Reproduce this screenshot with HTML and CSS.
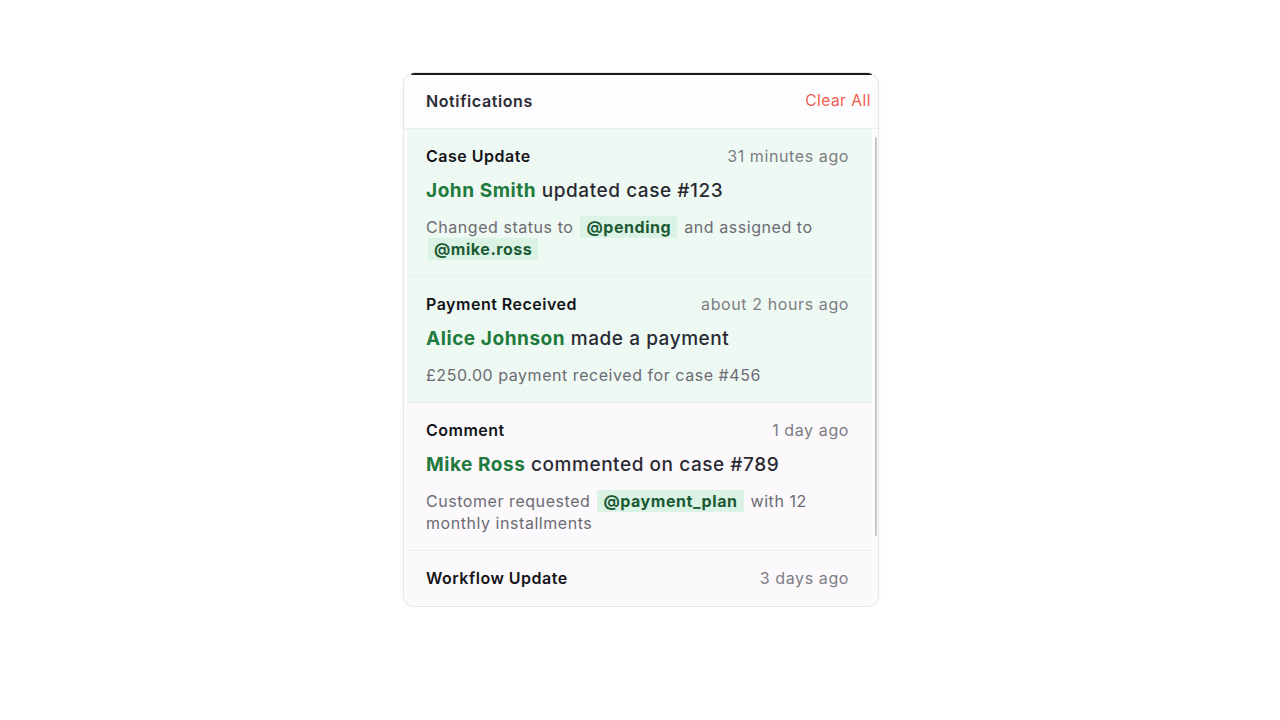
FILE: index.html
```html
<!DOCTYPE html>
<html lang="en">
<head>
<meta charset="utf-8">
<title>Notifications</title>
<link rel="stylesheet" href="styles.css">
</head>
<body>
<div class="panel">
  <div class="panel-header">
    <span class="panel-title">Notifications</span>
    <span class="clear-all">Clear All</span>
  </div>
  <div class="list">
    <div class="item item-green">
      <div class="item-top">
        <span class="item-type">Case Update</span>
        <span class="item-time">31 minutes ago</span>
      </div>
      <div class="item-headline"><span class="name">John Smith</span> updated case #123</div>
      <div class="item-body">Changed status to <span class="mention">@pending</span> and assigned to <span class="mention">@mike.ross</span></div>
    </div>
    <div class="item item-green">
      <div class="item-top">
        <span class="item-type">Payment Received</span>
        <span class="item-time">about 2 hours ago</span>
      </div>
      <div class="item-headline"><span class="name">Alice Johnson</span> made a payment</div>
      <div class="item-body">£250.00 payment received for case #456</div>
    </div>
    <div class="item item-plain item-sep-inset">
      <div class="item-top">
        <span class="item-type">Comment</span>
        <span class="item-time">1 day ago</span>
      </div>
      <div class="item-headline"><span class="name">Mike Ross</span> commented on case #789</div>
      <div class="item-body">Customer requested <span class="mention">@payment_plan</span> with 12 monthly installments</div>
    </div>
    <div class="item item-plain">
      <div class="item-top">
        <span class="item-type">Workflow Update</span>
        <span class="item-time">3 days ago</span>
      </div>
    </div>
  </div>
  <div class="scroll-thumb"></div>
</div>
</body>
</html>
```

FILE: styles.css
```css
html, body {
  margin: 0;
  padding: 0;
  background: #ffffff;
}
body {
  padding: 72px 0 0 403px;
  font-family: Inter, "Noto Sans", sans-serif;
  color: #2a2a33;
}
.panel {
  position: relative;
  width: 476px;
  height: 535px;
  box-sizing: border-box;
  border: 1px solid #e7e5ea;
  border-radius: 12px;
  background: #fdfcfe;
  overflow: hidden;
  box-shadow: 0 2px 4px rgba(0,0,0,0.04);
}
.panel::before {
  content: "";
  position: absolute;
  top: 0;
  left: 7px;
  right: 6px;
  height: 2px;
  border-radius: 1px;
  background: #1a1a1a;
}
.panel-header {
  height: 55px;
  display: flex;
  align-items: center;
  justify-content: space-between;
  padding: 0 7px 0 22px;
  border-bottom: 1px solid #eeeef0;
}
.panel-title {
  font-size: 16px;
  font-weight: 600;
  letter-spacing: 0.6px;
  color: #2b2b33;
}
.clear-all {
  font-size: 15.5px;
  letter-spacing: 0.5px;
  color: #f25c4c;
}
.list {
  margin: 0 6px 0 3px;
  height: 478px;
  overflow: hidden;
}
.item {
  padding: 15px 23px 16px 19px;
  border-bottom: 1px solid #e6eee9;
}
.item-green {
  background: #eff9f3;
}
.item-plain {
  background: #fbf9fc;
  border-bottom: none;
}
.item-sep-inset {
  padding-bottom: 17px;
  box-shadow: inset 0 -1px 0 #ecebef;
}
.item-top {
  display: flex;
  justify-content: space-between;
  align-items: center;
  height: 24px;
}
.item-type {
  font-size: 16px;
  font-weight: 600;
  letter-spacing: 0.5px;
  color: #141418;
}
.item-time {
  font-size: 16px;
  letter-spacing: 0.6px;
  color: #7d7d83;
}
.item-headline {
  margin-top: 9px;
  font-size: 19px;
  line-height: 28px;
  letter-spacing: 0.55px;
  font-weight: 500;
  color: #2a2a33;
}
.name {
  font-weight: 700;
  color: #1f7a3d;
}
.item-body {
  margin-top: 11px;
  font-size: 16px;
  line-height: 22px;
  letter-spacing: 0.55px;
  color: #6b6b72;
}
.mention {
  display: inline-block;
  padding: 0 6px;
  margin: 0 2px;
  background: #daf3e4;
  color: #1c5a35;
  font-weight: 700;
  line-height: 22px;
}
.scroll-thumb {
  position: absolute;
  top: 64px;
  right: 1px;
  width: 2px;
  height: 399px;
  background: #c6c6c8;
  border-radius: 1px;
}
```
